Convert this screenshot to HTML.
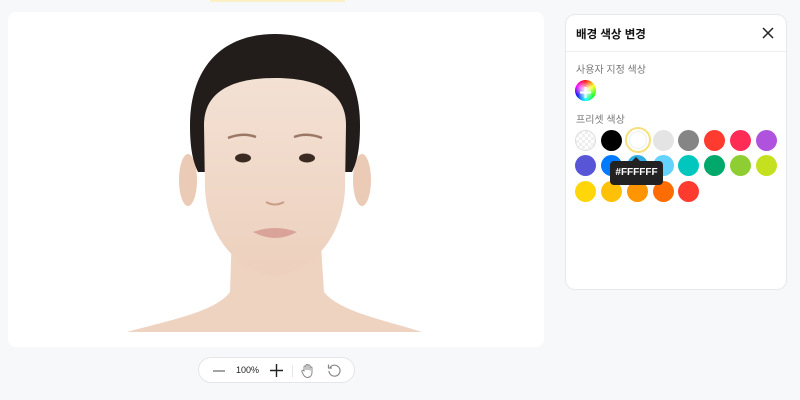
<!DOCTYPE html>
<html><head><meta charset="utf-8"><style>
*{margin:0;padding:0;box-sizing:border-box}
body{width:800px;height:400px;background:#f7f8fa;font-family:"Liberation Sans","Noto Sans CJK KR",sans-serif;position:relative;overflow:hidden}
.topbar{position:absolute;left:210px;top:0;width:135px;height:2px;background:#fbf1c4}
.img{position:absolute;left:8px;top:12px;width:536px;height:335px;background:#fff;border-radius:8px;overflow:hidden}
.panel{position:absolute;left:565px;top:14px;width:222px;height:276px;background:#fff;border:1px solid #e6e8eb;border-radius:10px}
.hd{height:37px;border-bottom:1px solid #eceef0;position:relative}
.hd b{position:absolute;left:10px;top:11px;font-size:11.5px;color:#111}
.lbl{position:absolute;left:10px;font-size:10px;color:#777}
.sw{position:absolute;width:21px;height:21px;border-radius:50%}
.tip{position:absolute;left:610px;top:161px;width:53px;height:24px;background:#222;border-radius:4px;color:#fff;font-size:10px;font-weight:bold;text-align:center;line-height:24px}
.tip:before{content:"";position:absolute;left:22px;top:-4px;border:4px solid transparent;border-top:0;border-bottom-color:#222}
.zoom{position:absolute;left:198px;top:357px;width:157px;height:26px;background:#fff;border:1px solid #e4e6e9;border-radius:13px}
</style></head><body>
<div class="topbar"></div>
<div class="img">
<svg width="536" height="335" viewBox="8 12 536 335">
<defs><linearGradient id="sk" x1="0" y1="0" x2="0" y2="1"><stop offset="0" stop-color="#f3e1d4"/><stop offset="1" stop-color="#edd0bd"/></linearGradient></defs>
<path d="M127 332 C170 320 215 312 230 292 L232 230 L320 230 L324 292 C340 312 385 320 422 332 Z" fill="#efd3c1"/>
<ellipse cx="188" cy="180" rx="9" ry="26" fill="#ebcbb6"/>
<ellipse cx="362" cy="180" rx="9" ry="26" fill="#ebcbb6"/>
<path d="M275 34 C218 34 190 72 190 125 C190 145 192 160 198 172 L352 172 C358 160 360 145 360 125 C360 72 332 34 275 34 Z" fill="#221d1b"/>
<path d="M204 125 C204 90 235 78 275 78 C315 78 346 90 346 125 L345 190 C342 240 310 272 275 276 C240 272 208 240 205 190 Z" fill="url(#sk)"/>
<path d="M228 138 Q243 132 256 137" stroke="#9b7866" stroke-width="2.5" fill="none"/>
<path d="M294 137 Q307 132 322 138" stroke="#9b7866" stroke-width="2.5" fill="none"/>
<ellipse cx="243" cy="158" rx="8" ry="4.5" fill="#3a2a22"/>
<ellipse cx="307" cy="158" rx="8" ry="4.5" fill="#3a2a22"/>
<path d="M266 202 Q275 207 284 202" stroke="#c89c86" stroke-width="2" fill="none"/>
<path d="M253 232 Q275 224 297 232 Q275 244 253 232 Z" fill="#d9a39a"/>
</svg>
</div>
<div class="panel">
<div class="hd"><b>배경 색상 변경</b>
<svg style="position:absolute;right:12px;top:12px" width="12" height="12"><path d="M1 1L11 11M11 1L1 11" stroke="#222" stroke-width="1.5"/></svg></div>
<div class="lbl" style="top:46px">사용자 지정 색상</div>
<div class="lbl" style="top:96px">프리셋 색상</div>
</div>
<div class="sw" style="left:575px;top:80px;background:radial-gradient(circle,#fff 0,rgba(255,255,255,.6) 30%,rgba(255,255,255,0) 70%),conic-gradient(red,yellow,lime,cyan,blue,magenta,red)"></div>
<div style="position:absolute;left:580px;top:85px;width:11px;height:11px;">
<svg width="11" height="11"><path d="M5.5 0V11M0 5.5H11" stroke="#fff" stroke-width="2"/></svg></div>
<div class="sw" style="left:575px;top:130px;border:1px solid #ddd;background:repeating-conic-gradient(#eee 0 25%,#fff 0 50%) 0 0/6px 6px"></div>
<div class="sw" style="left:601px;top:130px;background:#000"></div>
<div class="sw" style="left:625px;top:127px;width:26px;height:26px;border:2px solid #f7df7c;background:#fff;box-shadow:inset 0 0 0 2px #fff,inset 0 0 0 3px #eee"></div>
<div class="sw" style="left:653px;top:130px;background:#e4e4e4"></div>
<div class="sw" style="left:678px;top:130px;background:#858585"></div>
<div class="sw" style="left:704px;top:130px;background:#ff3b30"></div>
<div class="sw" style="left:730px;top:130px;background:#ff2d55"></div>
<div class="sw" style="left:756px;top:130px;background:#af52de"></div>
<div class="sw" style="left:575px;top:155px;background:#5856d6"></div>
<div class="sw" style="left:601px;top:155px;background:#007aff"></div>
<div class="sw" style="left:627px;top:155px;background:#32ade6"></div>
<div class="sw" style="left:653px;top:155px;background:#64d2ff"></div>
<div class="sw" style="left:678px;top:155px;background:#00c7be"></div>
<div class="sw" style="left:704px;top:155px;background:#00a86b"></div>
<div class="sw" style="left:730px;top:155px;background:#8fce32"></div>
<div class="sw" style="left:756px;top:155px;background:#c4e01f"></div>
<div class="sw" style="left:575px;top:181px;background:#ffd60a"></div>
<div class="sw" style="left:601px;top:181px;background:#ffc107"></div>
<div class="sw" style="left:627px;top:181px;background:#ff9500"></div>
<div class="sw" style="left:653px;top:181px;background:#ff6d00"></div>
<div class="sw" style="left:678px;top:181px;background:#ff3b30"></div>
<div class="tip">#FFFFFF</div>
<div class="zoom">
<svg style="position:absolute;left:14px;top:12px" width="12" height="2"><path d="M0 1H12" stroke="#666" stroke-width="1.2"/></svg>
<span style="position:absolute;left:37px;top:7px;font-size:9px;color:#222">100%</span>
<svg style="position:absolute;left:71px;top:6px" width="13" height="13"><path d="M6.5 0V13M0 6.5H13" stroke="#222" stroke-width="1.4"/></svg>
<div style="position:absolute;left:93px;top:7px;width:1px;height:12px;background:#e6e6e6"></div>
<svg style="position:absolute;left:102px;top:5px" width="14" height="15" viewBox="0 0 14 15"><path d="M3 8V4a1 1 0 0 1 2 0V7V2.5a1 1 0 0 1 2 0V7V3a1 1 0 0 1 2 0V7.5V5a1 1 0 0 1 2 0v4.5c0 3-2 5-4.5 5S3 13 2 11L0.8 8.5a1 1 0 0 1 1.8-.8Z" fill="none" stroke="#888" stroke-width="1"/></svg>
<svg style="position:absolute;left:128px;top:5px" width="15" height="15" viewBox="0 0 15 15"><path d="M3 4.5A5.5 5.5 0 1 1 2 8" fill="none" stroke="#888" stroke-width="1.2"/><path d="M1.5 1.5V5H5" fill="none" stroke="#888" stroke-width="1.2"/></svg>
</div>
</body></html>
